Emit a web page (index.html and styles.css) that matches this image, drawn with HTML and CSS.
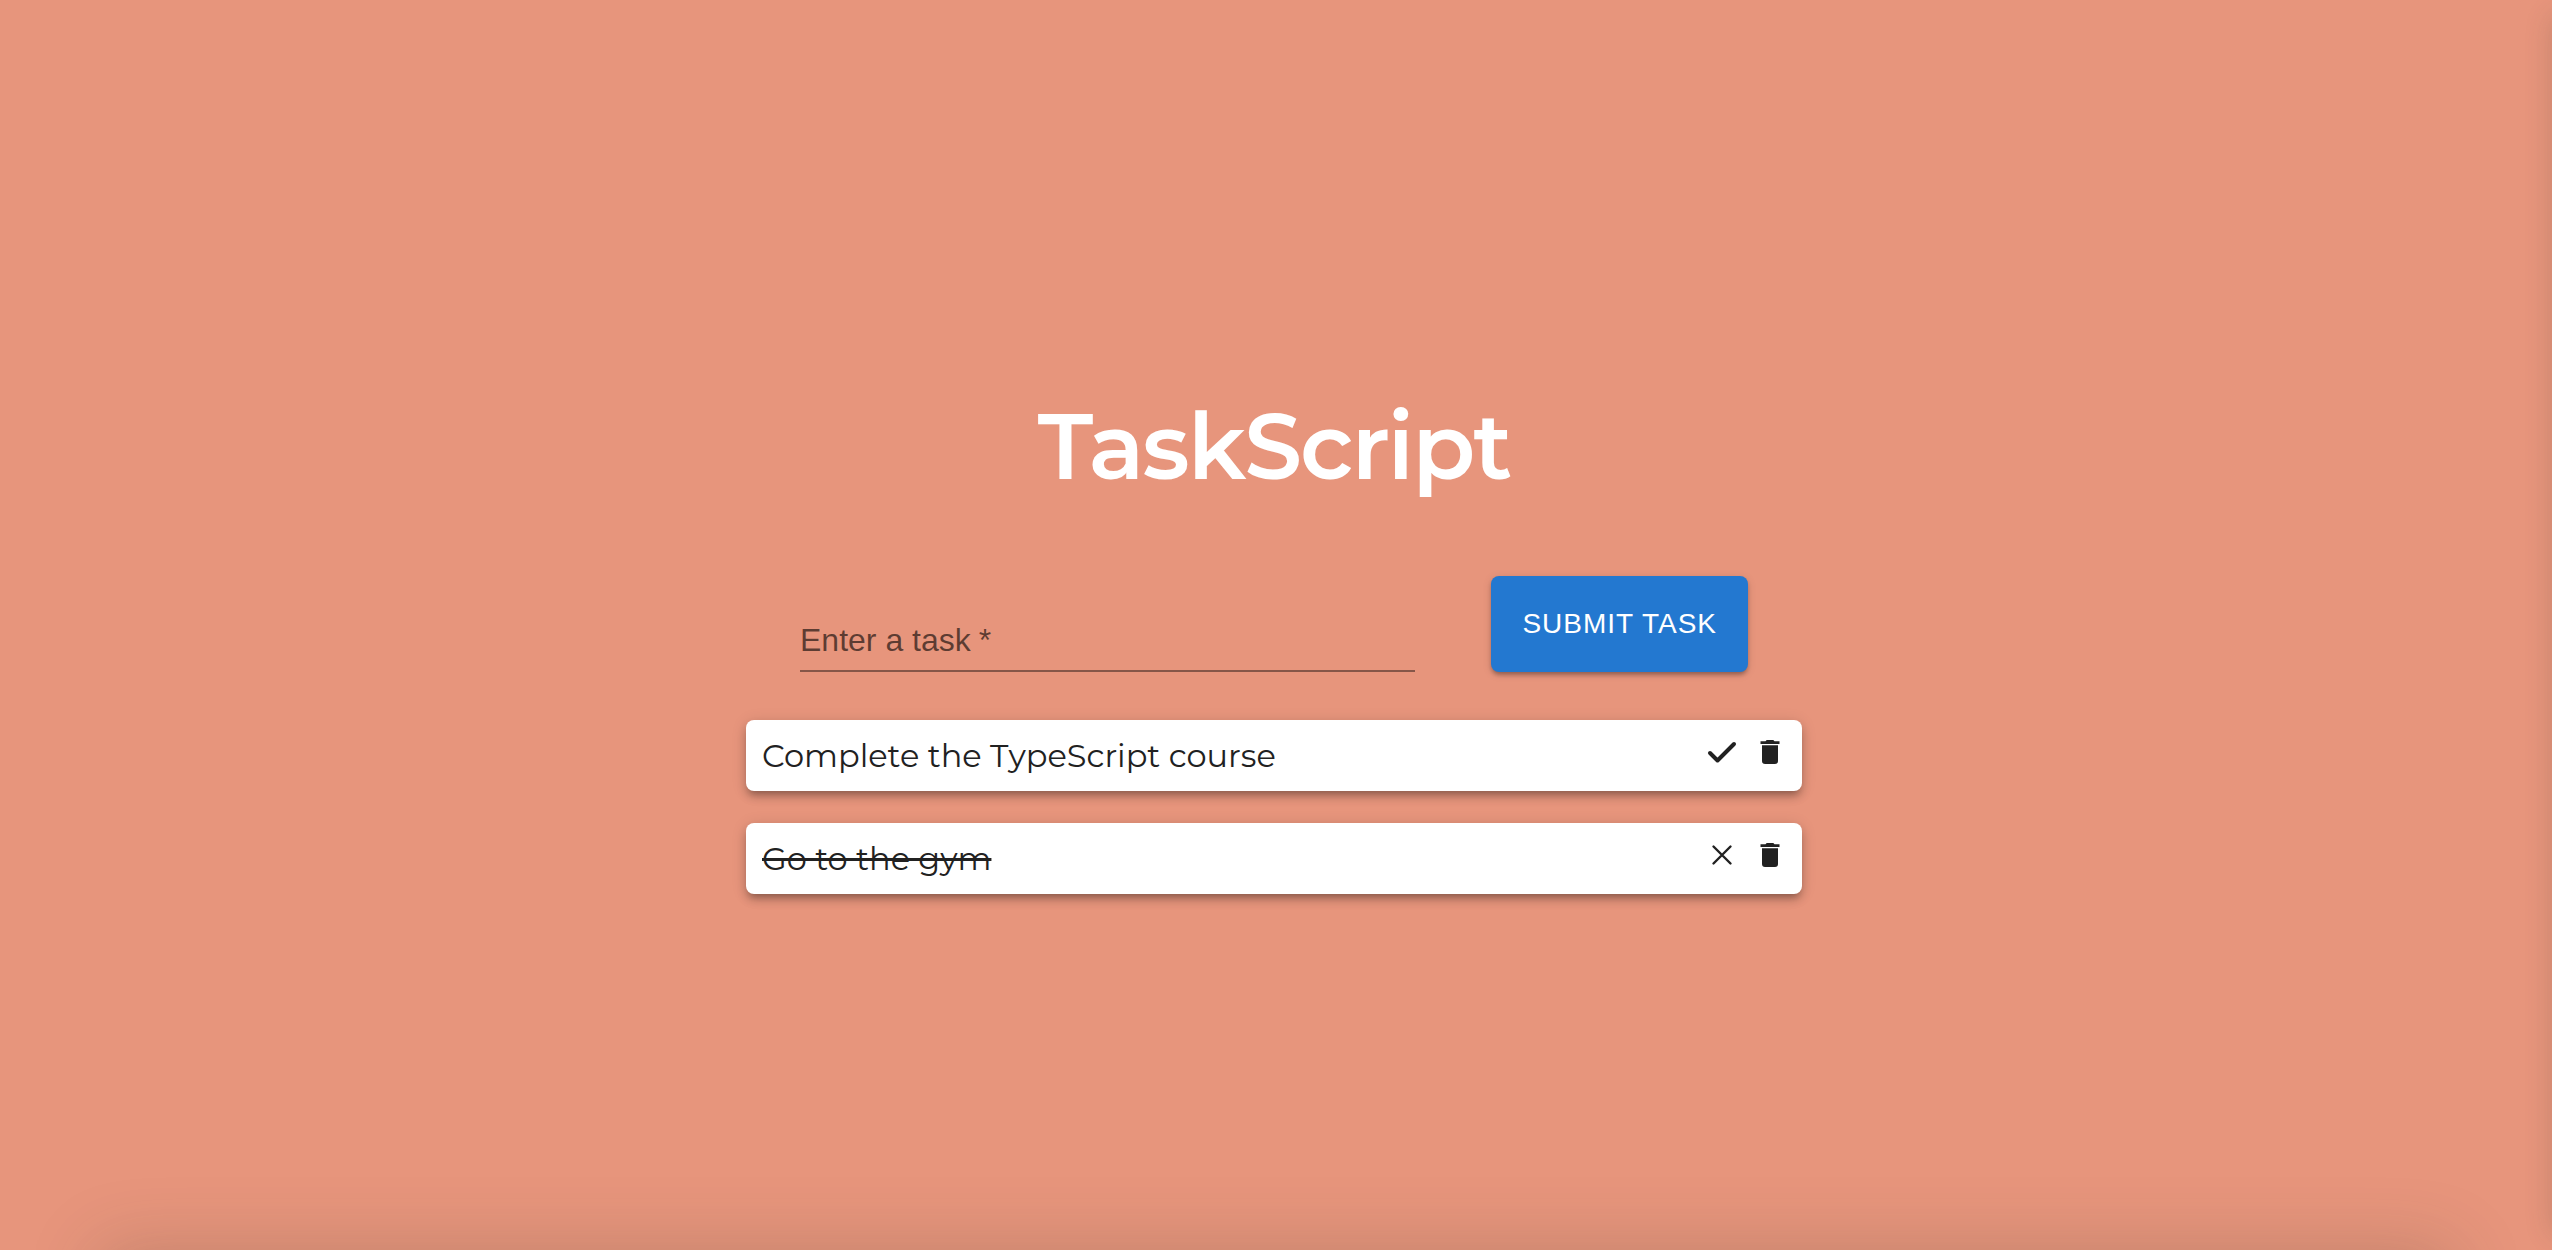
FILE: index.html
```html
<!DOCTYPE html>
<html lang="en">
<head>
  <meta charset="utf-8">
  <meta name="viewport" content="width=device-width, initial-scale=1">
  <title>TaskScript</title>
  <link rel="stylesheet" href="styles.css">
</head>
<body>
  <main class="app">
    <h1 class="title">TaskScript</h1>
    <form class="task-form">
      <div class="field">
        <input class="field-input" id="task" type="text" required placeholder=" ">
        <label class="field-label" for="task">Enter a task<span class="field-required">*</span></label>
      </div>
      <button class="submit" type="submit">SUBMIT TASK</button>
    </form>
    <ul class="tasks">
      <li class="task">
        <span class="task-name">Complete the TypeScript course</span>
        <button class="icon-button" type="button" aria-label="Complete task">
          <svg class="icon" viewBox="0 0 32 32"><path d="M4 17l7.500 7.500L28 8" fill="none" stroke="currentColor" stroke-width="4" stroke-linecap="round" stroke-linejoin="round"/></svg>
        </button>
        <button class="icon-button" type="button" aria-label="Delete task">
          <svg class="icon" viewBox="0 0 32 32"><path d="M7 5.300h4.500l1.200-1.300h6.600l1.200 1.300H25.500V8H6.500V5.300zM8 9.300h16V25a3 3 0 0 1-3 3H11a3 3 0 0 1-3-3z" fill="currentColor"/></svg>
        </button>
      </li>
      <li class="task">
        <span class="task-name task-done">Go to the gym</span>
        <button class="icon-button" type="button" aria-label="Reopen task">
          <svg class="icon" viewBox="0 0 32 32"><path d="M7.500 7.500l17 17M24.500 7.500l-17 17" fill="none" stroke="currentColor" stroke-width="2.400" stroke-linecap="round"/></svg>
        </button>
        <button class="icon-button" type="button" aria-label="Delete task">
          <svg class="icon" viewBox="0 0 32 32"><path d="M7 5.300h4.500l1.200-1.300h6.600l1.200 1.300H25.500V8H6.500V5.300zM8 9.300h16V25a3 3 0 0 1-3 3H11a3 3 0 0 1-3-3z" fill="currentColor"/></svg>
        </button>
      </li>
    </ul>
  </main>
</body>
</html>
```
FILE: styles.css
```css
* {
  box-sizing: border-box;
}

body {
  margin: 0;
  min-height: 100vh;
  display: flex;
  align-items: center;
  justify-content: center;
  padding: 34px 4px 0 0;
  background: #e7957c;
  color: #212121;
  font-family: Montserrat, Inter, sans-serif;
}

/* Soft shade along the bottom and right edges of the window */
body::before,
body::after {
  content: "";
  position: fixed;
  pointer-events: none;
}

body::before {
  top: 100%;
  left: 100px;
  right: 100px;
  height: 100px;
  box-shadow: 0 0 72px rgba(60, 60, 50, 0.22);
}

body::after {
  left: 100%;
  top: 16px;
  bottom: 16px;
  width: 40px;
  box-shadow: 0 0 28px rgba(60, 60, 50, 0.2);
}

.app {
  width: 100%;
  max-width: 1056px;
}

.title {
  margin: 0 0 74px;
  color: #fff;
  font-size: 92px;
  font-weight: 600;
  line-height: 112px;
  letter-spacing: -2px;
  text-align: center;
}

.task-form {
  display: flex;
  align-items: flex-end;
  gap: 76px;
  padding: 0 54px;
  margin-bottom: 48px;
}

.field {
  position: relative;
  flex: 1;
}

.field-input {
  display: block;
  width: 100%;
  height: 68px;
  padding: 8px 0 10px;
  border: 0;
  border-bottom: 2px solid rgba(0, 0, 0, 0.42);
  outline: 0;
  background: transparent;
  color: #212121;
  font: 32px/48px "Liberation Sans", Arial, sans-serif;
}

/* The label lies over the empty text box */
.field-label {
  position: absolute;
  left: 0;
  bottom: 8px;
  color: rgba(0, 0, 0, 0.6);
  font: 32px/48px "Liberation Sans", Arial, sans-serif;
  pointer-events: none;
}

.field-input:not(:placeholder-shown) + .field-label {
  display: none;
}

.field-required {
  margin-left: 8px;
}

.submit {
  height: 96px;
  padding: 0 31px;
  border: 0;
  border-radius: 8px;
  background: #2378d0;
  box-shadow: 0 4px 4px -2px rgba(0, 0, 0, 0.2), 0 3px 4px rgba(0, 0, 0, 0.14), 0 2px 10px rgba(0, 0, 0, 0.12);
  color: #fff;
  font: 28px/48px "Liberation Sans", Arial, sans-serif;
  letter-spacing: 1px;
  cursor: pointer;
}

.tasks {
  display: flex;
  flex-direction: column;
  gap: 32px;
  margin: 0;
  padding: 0;
  list-style: none;
}

.task {
  display: flex;
  align-items: center;
  gap: 16px;
  height: 71px;
  padding: 0 16px;
  border-radius: 8px;
  background: #fff;
  box-shadow: 0 6px 6px -4px rgba(0, 0, 0, 0.2), 0 6px 10px rgba(0, 0, 0, 0.18), 0 2px 16px rgba(0, 0, 0, 0.12);
}

.task-name {
  margin-right: auto;
  font-size: 32px;
  line-height: 40px;
}

.task-done {
  text-decoration: line-through;
}

.icon-button {
  padding: 0 0 8px;
  border: 0;
  background: transparent;
  color: #212121;
  cursor: pointer;
}

.icon {
  display: block;
  width: 32px;
  height: 32px;
}
```
